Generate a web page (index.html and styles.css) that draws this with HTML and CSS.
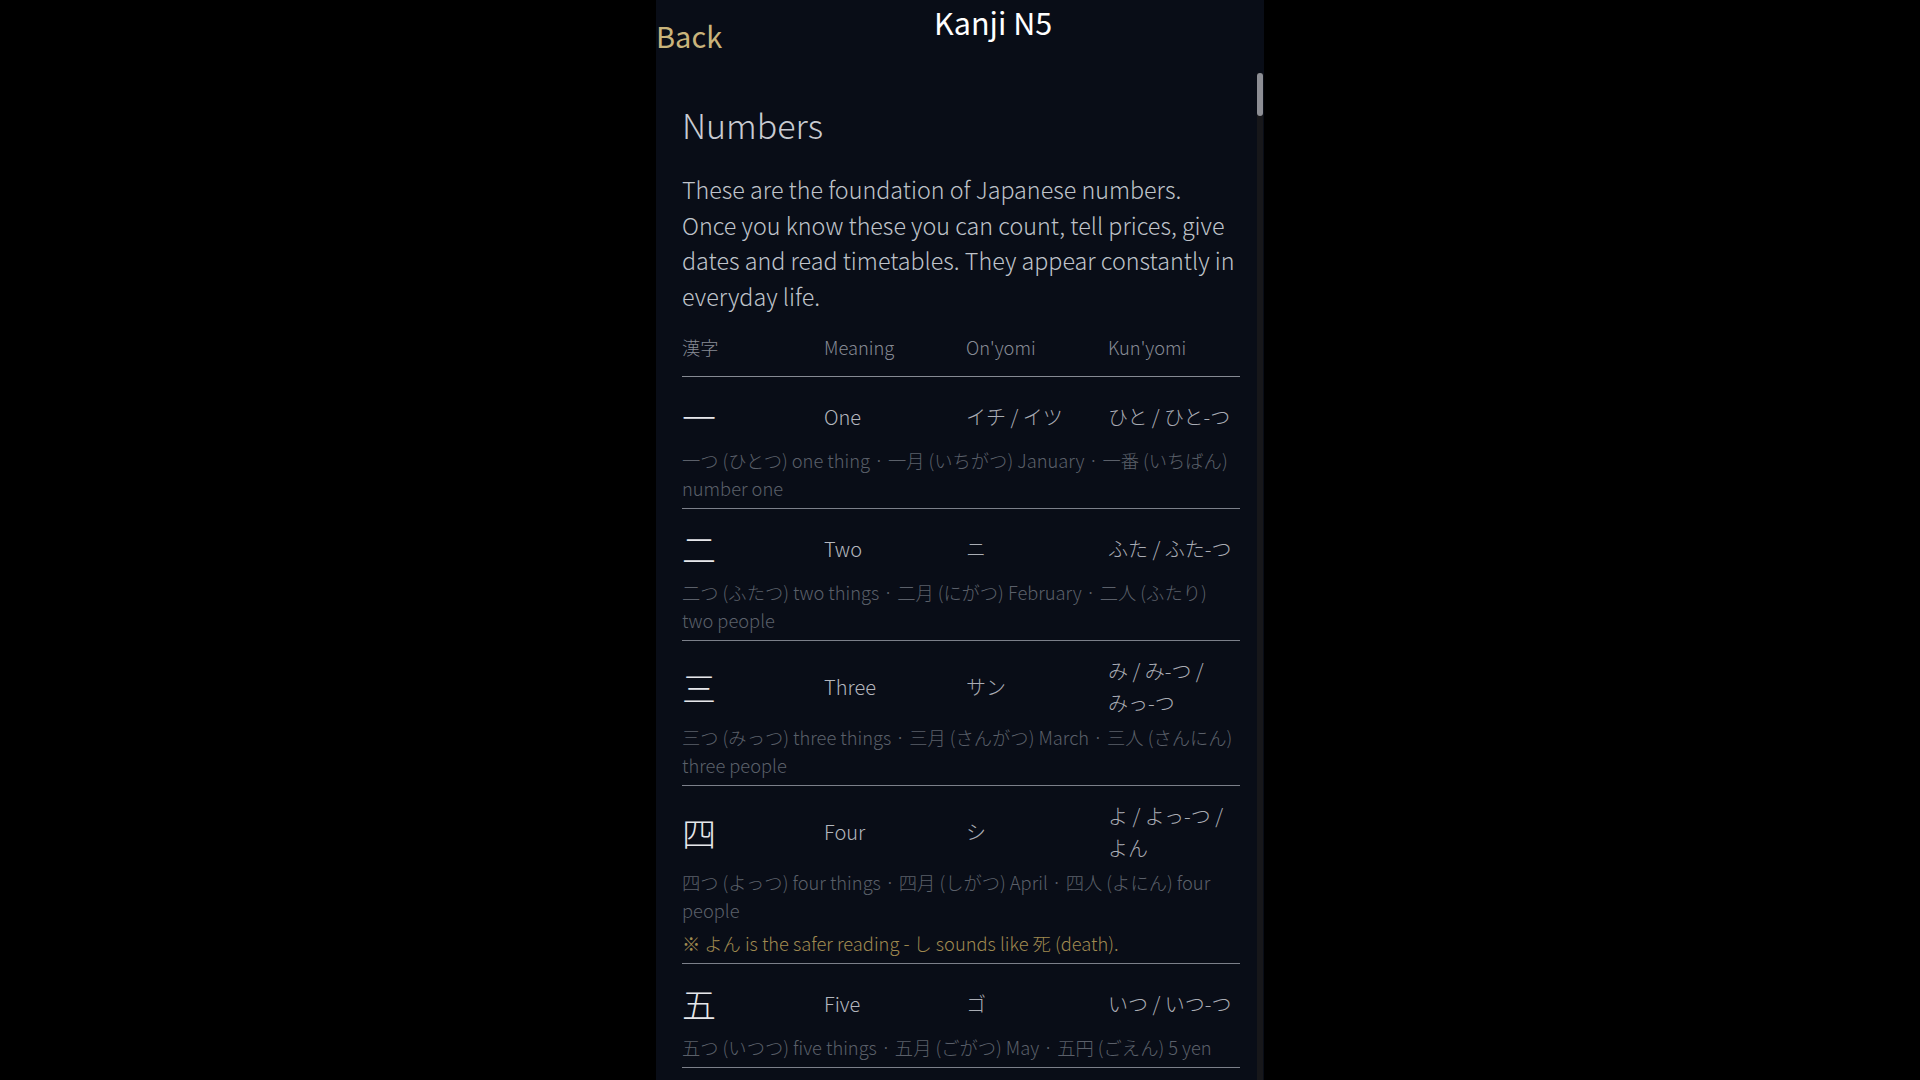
FILE: index.html
```html
<!DOCTYPE html>
<html lang="en">
<head>
  <meta charset="UTF-8" />
  <meta name="viewport" content="width=device-width, initial-scale=1.0"/>
  <title>Kanji N5</title>
  <link rel="stylesheet" href="styles.css">
</head>
<body>
  <div class="screen">
    <div class="topbar">
      <a class="back" href="#">Back</a>
      <h1 class="title">Kanji N5</h1>
    </div>

    <div class="content">
      <h2 class="section-title">Numbers</h2>
      <p class="intro">These are the foundation of Japanese numbers. Once you know these you can count, tell prices, give dates and read timetables. They appear constantly in everyday life.</p>

      <div class="kanji-table">
        <div class="head">
          <span>漢字</span>
          <span>Meaning</span>
          <span>On'yomi</span>
          <span>Kun'yomi</span>
        </div>

        <div class="entry">
          <div class="main">
            <span class="kanji">一</span>
            <span class="meaning">One</span>
            <span class="reading">イチ / イツ</span>
            <span class="reading">ひと / ひと-つ</span>
          </div>
          <p class="examples">一つ (ひとつ) one thing · 一月 (いちがつ) January · 一番 (いちばん) number one</p>
        </div>

        <div class="entry">
          <div class="main">
            <span class="kanji">二</span>
            <span class="meaning">Two</span>
            <span class="reading">ニ</span>
            <span class="reading">ふた / ふた-つ</span>
          </div>
          <p class="examples">二つ (ふたつ) two things · 二月 (にがつ) February · 二人 (ふたり) two people</p>
        </div>

        <div class="entry">
          <div class="main">
            <span class="kanji">三</span>
            <span class="meaning">Three</span>
            <span class="reading">サン</span>
            <span class="reading">み / み-つ / みっ-つ</span>
          </div>
          <p class="examples">三つ (みっつ) three things · 三月 (さんがつ) March · 三人 (さんにん) three people</p>
        </div>

        <div class="entry">
          <div class="main">
            <span class="kanji">四</span>
            <span class="meaning">Four</span>
            <span class="reading">シ</span>
            <span class="reading">よ / よっ-つ / よん</span>
          </div>
          <p class="examples">四つ (よっつ) four things · 四月 (しがつ) April · 四人 (よにん) four people</p>
          <p class="note">※ よん is the safer reading - し sounds like 死 (death).</p>
        </div>

        <div class="entry">
          <div class="main">
            <span class="kanji">五</span>
            <span class="meaning">Five</span>
            <span class="reading">ゴ</span>
            <span class="reading">いつ / いつ-つ</span>
          </div>
          <p class="examples">五つ (いつつ) five things · 五月 (ごがつ) May · 五円 (ごえん) 5 yen</p>
        </div>
      </div>
    </div>

    <div class="scroll-track"><div class="scroll-thumb"></div></div>
  </div>
</body>
</html>
```

FILE: styles.css
```css
body {
  margin: 0;
  background: #000;
  font-family: "Noto Sans CJK JP", "Noto Sans", sans-serif;
  font-weight: 300;
  color: #c2c5cc;
}

.screen {
  position: relative;
  width: 608px;
  height: 100vh;
  margin: 0 auto;
  background: #090d17;
  display: flex;
  flex-direction: column;
  overflow: hidden;
}

/* Top bar */
.topbar {
  display: flex;
  align-items: flex-start;
  height: 73px;
  flex-shrink: 0;
}

.back {
  font-size: 29px;
  font-weight: 400;
  line-height: 36px;
  padding-top: 17px;
  color: #c9b47b;
  text-decoration: none;
}

.title {
  flex: 1;
  margin: 0;
  padding-top: 4px;
  font-size: 30.5px;
  font-weight: 400;
  line-height: 36px;
  text-align: center;
  color: #fff;
}

/* Scroll area */
.content {
  flex: 1;
  overflow-y: auto;
  scrollbar-width: none;
  padding: 0 24px 40px 26px;
}

.content::-webkit-scrollbar {
  display: none;
}

.scroll-track {
  position: absolute;
  top: 73px;
  right: 1px;
  bottom: 0;
  width: 6px;
  background: #17171a;
}

.scroll-thumb {
  height: 43px;
  border-radius: 3px;
  background: #8d8e94;
}

.section-title {
  margin: 31px 0 0;
  font-size: 34px;
  font-weight: 300;
  line-height: 42px;
  color: #c8cbd2;
}

.intro {
  margin: 26px 0 0;
  font-size: 23.3px;
  line-height: 35.5px;
  color: #bfc3ca;
}

/* Kanji table */
.kanji-table {
  margin-top: 20px;
}

.head,
.main {
  display: grid;
  grid-template-columns: repeat(4, 1fr);
  column-gap: 10px;
}

.head {
  padding-bottom: 16px;
  border-bottom: 1px solid #868a93;
  font-size: 18.3px;
  line-height: 26px;
  color: #878b95;
}

.entry {
  padding: 14px 0 6px;
  border-bottom: 1px solid #7c808a;
}

.main {
  align-items: center;
}

.kanji {
  font-size: 34px;
  line-height: 51px;
  color: #e6e7eb;
}

.meaning,
.reading {
  font-size: 20px;
  line-height: 32px;
  color: #b3b6be;
  word-break: keep-all;
}

.reading {
  color: #a9acb4;
}

.examples,
.note {
  margin: 4px 0 0;
  font-size: 18.3px;
  line-height: 28px;
  color: #5b606a;
  word-break: keep-all;
}

.note {
  margin-top: 5px;
  color: #a08a50;
}
```
